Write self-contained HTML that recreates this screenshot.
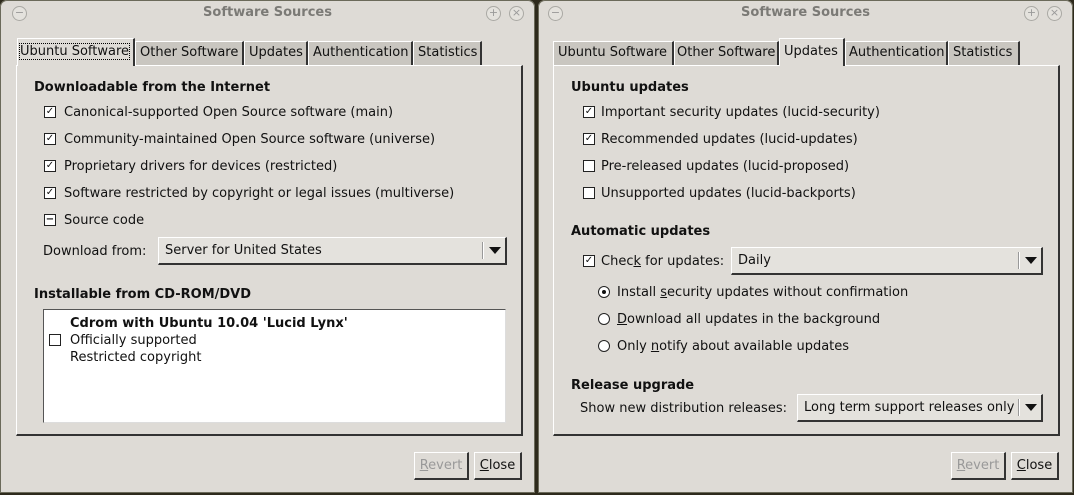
<!DOCTYPE html>
<html><head><style>
*{box-sizing:border-box;margin:0;padding:0}
body{width:1074px;height:495px;background:#2e2a1c;position:relative;overflow:hidden;font-family:"DejaVu Sans","Liberation Sans",sans-serif;font-size:13px;color:#111}
.win{position:absolute;top:0;width:535px;height:493px;background:#dedbd6;box-shadow:inset 0 0 0 1px #6b6a5a;border-radius:7px 7px 0 0}
.t{position:absolute;white-space:nowrap;line-height:16px;margin-top:1px}
.b{font-weight:bold}
.title{position:absolute;top:5px;left:0;right:0;text-align:center;font-weight:bold;color:#7b7a76;font-size:13px}
.circ{position:absolute;top:6px;width:15px;height:15px;border-radius:50%;border:1px solid #aaa9a4;background:#e4e2dd;color:#999;font-size:11px;line-height:12px;text-align:center}
.panel{position:absolute;left:16px;top:65px;width:507px;height:371px;border:1px solid #fff;border-right:2px solid #333;border-bottom:2px solid #333}
.tab{position:absolute;top:41px;height:24px;background:#c9c6c0;border:1px solid #fff;border-right:2px solid #333;border-bottom:none;line-height:22px;padding:0 0 0 4px;white-space:nowrap;overflow:hidden}
.tab.act{background:#dedbd6;top:38px;height:28px;line-height:26px}
.cb{position:absolute;width:12px;height:12px;border:1px solid #222;background:#fff;font-size:10px;line-height:10px;text-align:center}
.rd{position:absolute;width:12px;height:12px;border:1px solid #222;border-radius:50%;background:#fff}
.combo{position:absolute;height:28px;background:#e4e2dd;border:1px solid #fff;border-right:2px solid #333;border-bottom:2px solid #333;line-height:25px;padding-left:6px;white-space:nowrap;overflow:hidden}
.arr{position:absolute;right:4px;top:9px;width:0;height:0;border-left:6px solid transparent;border-right:6px solid transparent;border-top:7px solid #111}
.sep{position:absolute;right:21px;top:4px;width:2px;height:17px;border-left:1px solid #999;border-right:1px solid #fff}
.btn{position:absolute;top:452px;height:28px;background:#dedbd6;border:1px solid #fff;border-right:2px solid #333;border-bottom:2px solid #333;text-align:center;line-height:25px}
u{text-decoration:underline}
</style></head><body>

<div class="win" style="left:0">
<div class="title">Software Sources</div>
<div class="circ" style="left:12px">−</div>
<div class="circ" style="left:486px">+</div>
<div class="circ" style="left:509px">×</div>
<div class="panel"></div>
<div class="tab act" style="left:17px;width:118px;padding-left:2px"><span style="outline:1px dotted #000">Ubuntu Software</span></div>
<div class="tab" style="left:135px;width:109px">Other Software</div>
<div class="tab" style="left:244px;width:64px">Updates</div>
<div class="tab" style="left:308px;width:105px">Authentication</div>
<div class="tab" style="left:413px;width:69px">Statistics</div>
<div class="t b" style="left:34px;top:79px">Downloadable from the Internet</div>
<div class="cb" style="left:44px;top:106px">✓</div><div class="t" style="left:64px;top:104px">Canonical-supported Open Source software (main)</div>
<div class="cb" style="left:44px;top:133px">✓</div><div class="t" style="left:64px;top:131px">Community-maintained Open Source software (universe)</div>
<div class="cb" style="left:44px;top:160px">✓</div><div class="t" style="left:64px;top:158px">Proprietary drivers for devices (restricted)</div>
<div class="cb" style="left:44px;top:187px">✓</div><div class="t" style="left:64px;top:185px">Software restricted by copyright or legal issues (multiverse)</div>
<div class="cb" style="left:44px;top:214px;font-weight:bold;line-height:9px">−</div><div class="t" style="left:64px;top:212px">Source code</div>
<div class="t" style="left:43px;top:243px">Download from:</div>
<div class="combo" style="left:158px;top:237px;width:349px">Server for United States<div class="sep"></div><div class="arr"></div></div>
<div class="t b" style="left:34px;top:286px">Installable from CD-ROM/DVD</div>
<div style="position:absolute;left:43px;top:309px;width:463px;height:114px;background:#fff;border:1px solid #555;border-right-color:#ddd;border-bottom-color:#ddd"></div>
<div class="cb" style="left:49px;top:334px"></div>
<div class="t b" style="left:70px;top:315px">Cdrom with Ubuntu 10.04 'Lucid Lynx'</div>
<div class="t" style="left:70px;top:332px">Officially supported</div>
<div class="t" style="left:70px;top:349px">Restricted copyright</div>
<div class="btn" style="left:414px;width:55px;color:#999"><u>R</u>evert</div>
<div class="btn" style="left:474px;width:48px"><u>C</u>lose</div>
</div>

<div class="win" style="left:538px">
<div class="title">Software Sources</div>
<div class="circ" style="left:10px">−</div>
<div class="circ" style="left:486px">+</div>
<div class="circ" style="left:509px">×</div>
<div class="panel" style="left:15px"></div>
<div class="tab" style="left:15px;width:121px">Ubuntu Software</div>
<div class="tab" style="left:136px;width:105px;padding-left:2px">Other Software</div>
<div class="tab act" style="left:241px;width:66px">Updates</div>
<div class="tab" style="left:307px;width:103px;padding-left:3px">Authentication</div>
<div class="tab" style="left:410px;width:72px">Statistics</div>
<div class="t b" style="left:33px;top:79px">Ubuntu updates</div>
<div class="cb" style="left:45px;top:106px">✓</div><div class="t" style="left:63px;top:104px">Important security updates (lucid-security)</div>
<div class="cb" style="left:45px;top:133px">✓</div><div class="t" style="left:63px;top:131px">Recommended updates (lucid-updates)</div>
<div class="cb" style="left:45px;top:160px"></div><div class="t" style="left:63px;top:158px">Pre-released updates (lucid-proposed)</div>
<div class="cb" style="left:45px;top:187px"></div><div class="t" style="left:63px;top:185px">Unsupported updates (lucid-backports)</div>
<div class="t b" style="left:33px;top:223px">Automatic updates</div>
<div class="cb" style="left:45px;top:255px">✓</div><div class="t" style="left:63px;top:253px">Chec<u>k</u> for updates:</div>
<div class="combo" style="left:193px;top:247px;width:312px">Daily<div class="sep"></div><div class="arr"></div></div>
<div class="rd" style="left:60px;top:286px"><div style="position:absolute;left:3px;top:3px;width:4px;height:4px;border-radius:50%;background:#111"></div></div>
<div class="t" style="left:79px;top:284px">Install <u>s</u>ecurity updates without confirmation</div>
<div class="rd" style="left:60px;top:313px"></div><div class="t" style="left:79px;top:311px"><u>D</u>ownload all updates in the background</div>
<div class="rd" style="left:60px;top:340px"></div><div class="t" style="left:79px;top:338px">Only <u>n</u>otify about available updates</div>
<div class="t b" style="left:33px;top:377px">Release upgrade</div>
<div class="t" style="left:42px;top:400px">Show new distribution releases:</div>
<div class="combo" style="left:259px;top:394px;width:246px">Long term support releases only<div class="sep"></div><div class="arr"></div></div>
<div class="btn" style="left:413px;width:55px;color:#999"><u>R</u>evert</div>
<div class="btn" style="left:473px;width:48px"><u>C</u>lose</div>
</div>
</body></html>
